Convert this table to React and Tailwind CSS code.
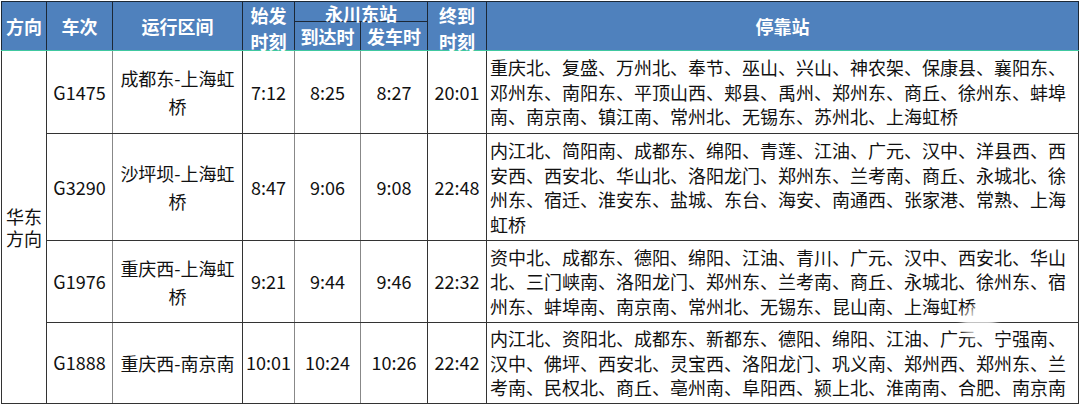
import React from "react";

const rows = [
    {
        id: "G1475",
        route: "成都东-上海虹桥",
        start: "7:12",
        arrive: "8:25",
        depart: "8:27",
        end: "20:01",
        stops: "重庆北、复盛、万州北、奉节、巫山、兴山、神农架、保康县、襄阳东、邓州东、南阳东、平顶山西、郏县、禹州、郑州东、商丘、徐州东、蚌埠南、南京南、镇江南、常州北、无锡东、苏州北、上海虹桥",
        h: "h-[83px]",
    },
    {
        id: "G3290",
        route: "沙坪坝-上海虹桥",
        start: "8:47",
        arrive: "9:06",
        depart: "9:08",
        end: "22:48",
        stops: "内江北、简阳南、成都东、绵阳、青莲、江油、广元、汉中、洋县西、西安西、西安北、华山北、洛阳龙门、郑州东、兰考南、商丘、永城北、徐州东、宿迁、淮安东、盐城、东台、海安、南通西、张家港、常熟、上海虹桥",
        h: "h-[107px]",
    },
    {
        id: "G1976",
        route: "重庆西-上海虹桥",
        start: "9:21",
        arrive: "9:44",
        depart: "9:46",
        end: "22:32",
        stops: "资中北、成都东、德阳、绵阳、江油、青川、广元、汉中、西安北、华山北、三门峡南、洛阳龙门、郑州东、兰考南、商丘、永城北、徐州东、宿州东、蚌埠南、南京南、常州北、无锡东、昆山南、上海虹桥",
        h: "h-[82px]",
    },
    {
        id: "G1888",
        route: "重庆西-南京南",
        start: "10:01",
        arrive: "10:24",
        depart: "10:26",
        end: "22:42",
        stops: "内江北、资阳北、成都东、新都东、德阳、绵阳、江油、广元、宁强南、汉中、佛坪、西安北、灵宝西、洛阳龙门、巩义南、郑州西、郑州东、兰考南、民权北、商丘、亳州南、阜阳西、颍上北、淮南南、合肥、南京南",
        h: "h-[80px]",
    },
];

export default function App() {
    const th = "border border-[#1c2836] border-b-[#40c8a0] p-0 font-bold text-white text-center align-middle";
    const td = "border border-[#333] p-0 text-center align-middle";
    return (
        <div className="relative w-[1080px] h-[404px] bg-white pl-px pt-px font-['Noto_Sans_CJK_SC',sans-serif] text-[18px] text-[#111] overflow-hidden">
            <table className="table-fixed border-collapse w-[1077px]">
                <colgroup>
                    <col className="w-[45px]" />
                    <col className="w-[66px]" />
                    <col className="w-[130px]" />
                    <col className="w-[52px]" />
                    <col className="w-[66px]" />
                    <col className="w-[67px]" />
                    <col className="w-[59px]" />
                    <col className="w-[592px]" />
                </colgroup>
                <thead className="bg-[#4f81bd]">
                    <tr className="h-[19px] leading-[19px]">
                        <th rowSpan={2} className={th}>方向</th>
                        <th rowSpan={2} className={th}>车次</th>
                        <th rowSpan={2} className={th}>运行区间</th>
                        <th rowSpan={2} className={th}>
                            <div className="h-[46px] leading-[26px] -mt-[3px]">始发<br />时刻</div>
                        </th>
                        <th colSpan={2} className="border border-[#1c2836] p-0 font-bold text-white text-center">
                            <div className="h-[19px] leading-[22px]">永川东站</div>
                        </th>
                        <th rowSpan={2} className={th}>
                            <div className="h-[46px] leading-[26px] -mt-[3px]">终到<br />时刻</div>
                        </th>
                        <th rowSpan={2} className={th}>停靠站</th>
                    </tr>
                    <tr className="h-[28px]">
                        <th className={th}>
                            <div className="h-[28px] leading-[28px]">到达时</div>
                        </th>
                        <th className={th}>
                            <div className="h-[28px] leading-[28px]">发车时</div>
                        </th>
                    </tr>
                </thead>
                <tbody>
                    {rows.map((r, i) => (
                        <tr key={r.id} className={r.h}>
                            {i === 0 && (
                                <td rowSpan={4} className={`${td} leading-[22px] px-[4px]`}>华东方向</td>
                            )}
                            <td className={`${td} border-r-[#888]`}>{r.id}</td>
                            <td className={`${td} leading-[28px] px-[2px]`}>{r.route}</td>
                            <td className={`${td} border-r-[#888]`}>{r.start}</td>
                            <td className={`${td} border-r-[#888]`}>{r.arrive}</td>
                            <td className={td}>{r.depart}</td>
                            <td className={td}>{r.end}</td>
                            <td className="border border-[#333] pl-[3px] pr-[2px] py-[3px] text-left align-middle leading-[24.5px]">
                                {r.stops}
                            </td>
                        </tr>
                    ))}
                </tbody>
            </table>
            <div className="absolute left-[962px] top-[306px] w-[34px] h-[34px] bg-white/70 blur-[3px] rounded-full"></div>
        </div>
    );
}
